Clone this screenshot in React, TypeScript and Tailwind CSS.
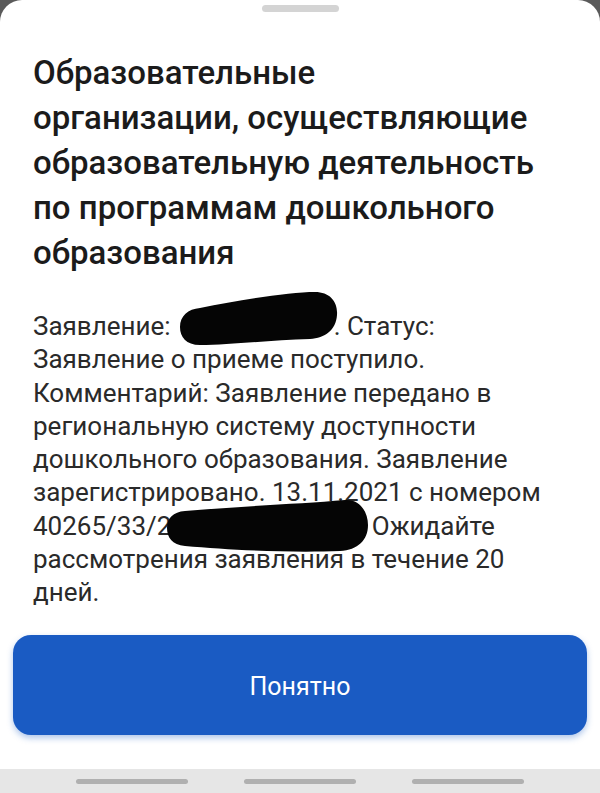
import React from 'react';

const bodyLines: React.ReactNode[] = [
  <>
    Заявление:<span className="inline-block w-[163px]" />. Статус:
  </>,
  'Заявление о приеме поступило.',
  'Комментарий: Заявление передано в',
  'региональную систему доступности',
  'дошкольного образования. Заявление',
  'зарегистрировано. 13.11.2021 с номером',
  <>
    40265/33/2<span className="inline-block w-[194px]" /> Ожидайте
  </>,
  'рассмотрения заявления в течение 20',
  'дней.',
];

const titleLines = [
  'Образовательные',
  'организации, осуществляющие',
  'образовательную деятельность',
  'по программам дошкольного',
  'образования',
];

const Redactions = () => (
  <svg
    className="pointer-events-none absolute left-0 top-0"
    width="600"
    height="793"
    viewBox="0 0 600 793"
  >
    <path
      d="M200 308 C240 300 290 292 315 292 C330 292 338 302 337 315 C336 330 325 338 310 339 C270 340 230 345 200 345 C186 345 180 337 180 327 C180 316 188 309 200 308 Z"
      fill="#050505"
    />
    <path
      d="M185 511 C240 506 300 504 345 500 C360 499 368 512 368 525 C368 540 358 550 340 551 C290 553 230 550 185 546 C172 545 167 537 167 528 C167 518 173 512 185 511 Z"
      fill="#050505"
    />
  </svg>
);

export default function App() {
  return (
    <div
      className="relative flex h-[793px] w-[600px] flex-col bg-[#5a5a5a]"
      style={{ fontFamily: 'Roboto, "Noto Sans", sans-serif' }}
    >
      <div className="flex flex-1 flex-col rounded-t-[22px] bg-white">
        <div className="mx-auto mt-[5px] h-[7px] w-[77px] rounded-full bg-[#d4d4d4]" />

        <h1 className="mt-[38px] px-[33px] text-[33px] font-medium leading-[45px] text-[#1b1b1b]">
          {titleLines.map((l) => (
            <div key={l} className="whitespace-nowrap">
              {l}
            </div>
          ))}
        </h1>

        <div className="mt-[35px] px-[33px] text-[26px] leading-[33.3px] text-[#2a2a2a]">
          {bodyLines.map((l, i) => (
            <div key={i} className="whitespace-nowrap">
              {l}
            </div>
          ))}
        </div>

        <button className="mx-[13px] mt-[25px] h-[100px] rounded-[18px] bg-[#1a5bc3] pt-[4px] text-[25px] text-white shadow-[0_3px_6px_rgba(26,91,195,0.35)]">
          Понятно
        </button>
      </div>

      <div className="flex h-[24px] items-center justify-center gap-[56px] bg-[#e6e6e6]">
        <div className="h-[5px] w-[112px] rounded-full bg-[#b0b0b0]" />
        <div className="h-[5px] w-[112px] rounded-full bg-[#b0b0b0]" />
        <div className="h-[5px] w-[112px] rounded-full bg-[#b0b0b0]" />
      </div>

      <Redactions />
    </div>
  );
}
